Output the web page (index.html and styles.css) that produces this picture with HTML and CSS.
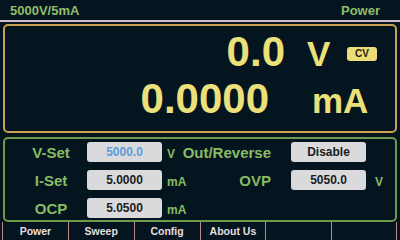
FILE: index.html
```html
<!DOCTYPE html>
<html lang="en">
<head>
  <meta charset="UTF-8">
  <title>Power</title>
  <link rel="stylesheet" href="styles.css">
</head>
<body>
  <header class="top-bar">
    <span>5000V/5mA</span>
    <span class="mode">Power</span>
  </header>

  <section class="readout">
    <div class="read-row">
      <span class="value volt">0.0</span>
      <span class="unit unit-v">V</span>
      <span class="badge">CV</span>
    </div>
    <div class="read-row">
      <span class="value amp">0.0000</span>
      <span class="unit unit-ma">mA</span>
    </div>
  </section>

  <section class="settings">
    <div class="label">V-Set</div>
    <div class="field active">5000.0</div>
    <div class="small-unit">V</div>
    <div class="label-r">Out/Reverse</div>
    <div class="field">Disable</div>
    <div></div>

    <div class="label">I-Set</div>
    <div class="field">5.0000</div>
    <div class="small-unit">mA</div>
    <div class="label-r">OVP</div>
    <div class="field">5050.0</div>
    <div class="small-unit right">V</div>

    <div class="label">OCP</div>
    <div class="field">5.0500</div>
    <div class="small-unit">mA</div>
  </section>

  <!-- soft keys -->
  <nav class="tabs">
    <div class="tab">Power</div>
    <div class="tab">Sweep</div>
    <div class="tab">Config</div>
    <div class="tab">About Us</div>
    <div class="tab"></div>
    <div class="tab"></div>
  </nav>
</body>
</html>
```

FILE: styles.css
```css
body {
  margin: 0;
  width: 400px;
  height: 240px;
  overflow: hidden;
  background-color: #051520;
  font-family: 'Liberation Sans', Arial, sans-serif;
  font-weight: bold;
}

.top-bar {
  height: 20px;
  display: flex;
  justify-content: space-between;
  align-items: center;
  padding: 0 20px 0 10px;
  color: #8fbd6a;
  font-size: 13px;
  border-bottom: 2px solid #cbbfcc;
}

.readout {
  margin: 2px 3px 0;
  height: 100px;
  border: 2px solid #c9a150;
  border-radius: 5px;
  padding-top: 5px;
  color: #ece07a;
}

.read-row {
  display: flex;
  align-items: baseline;
  justify-content: flex-end;
  height: 42px;
  line-height: 42px;
}

.read-row + .read-row {
  margin-top: 5px;
}

.value {
  font-size: 42px;
}

.volt {
  margin-right: 22px;
}

.amp {
  margin-right: 43px;
}

.unit {
  font-size: 35px;
}

.unit-v {
  width: 40px;
}

.unit-ma {
  width: 83px;
}

.badge {
  align-self: flex-start;
  margin: 16px 18px 0 0;
  width: 30px;
  height: 14px;
  line-height: 14px;
  border-radius: 3px;
  background-color: #ebdd78;
  color: #1e1c0c;
  font-size: 10px;
  text-align: center;
}

.settings {
  margin: 4px 3px 0;
  height: 78px;
  border: 2px solid #6d9b50;
  border-radius: 5px;
  padding: 3px 0 0 15px;
  display: grid;
  grid-template-columns: 67px 75px 16px 113px 75px 1fr;
  grid-template-rows: 20px 20px 20px;
  row-gap: 8px;
  align-items: center;
}

.label {
  text-align: center;
  padding-right: 5px;
  color: #89bb62;
  font-size: 15px;
}

.label-r {
  text-align: right;
  padding-right: 20px;
  color: #89bb62;
  font-size: 15px;
  white-space: nowrap;
}

.field {
  height: 20px;
  line-height: 20px;
  border-radius: 3px;
  background-color: #dadadd;
  color: #1c1c1c;
  font-size: 12px;
  text-align: center;
}

.field.active {
  color: #5c9ad6;
}

.small-unit {
  padding: 4px 0 0 5px;
  color: #89bb62;
  font-size: 12px;
  white-space: nowrap;
}

.small-unit.right {
  padding-left: 9px;
}

.tabs {
  display: grid;
  grid-template-columns: repeat(6, 1fr);
  margin: 0 3px 0 2px;
  height: 18px;
}

.tab {
  border-left: 1px solid #b88a86;
  color: #e6dfdf;
  font-size: 10.5px;
  line-height: 19px;
  text-align: center;
}

.tab:last-child {
  border-right: 1px solid #b88a86;
}
```
